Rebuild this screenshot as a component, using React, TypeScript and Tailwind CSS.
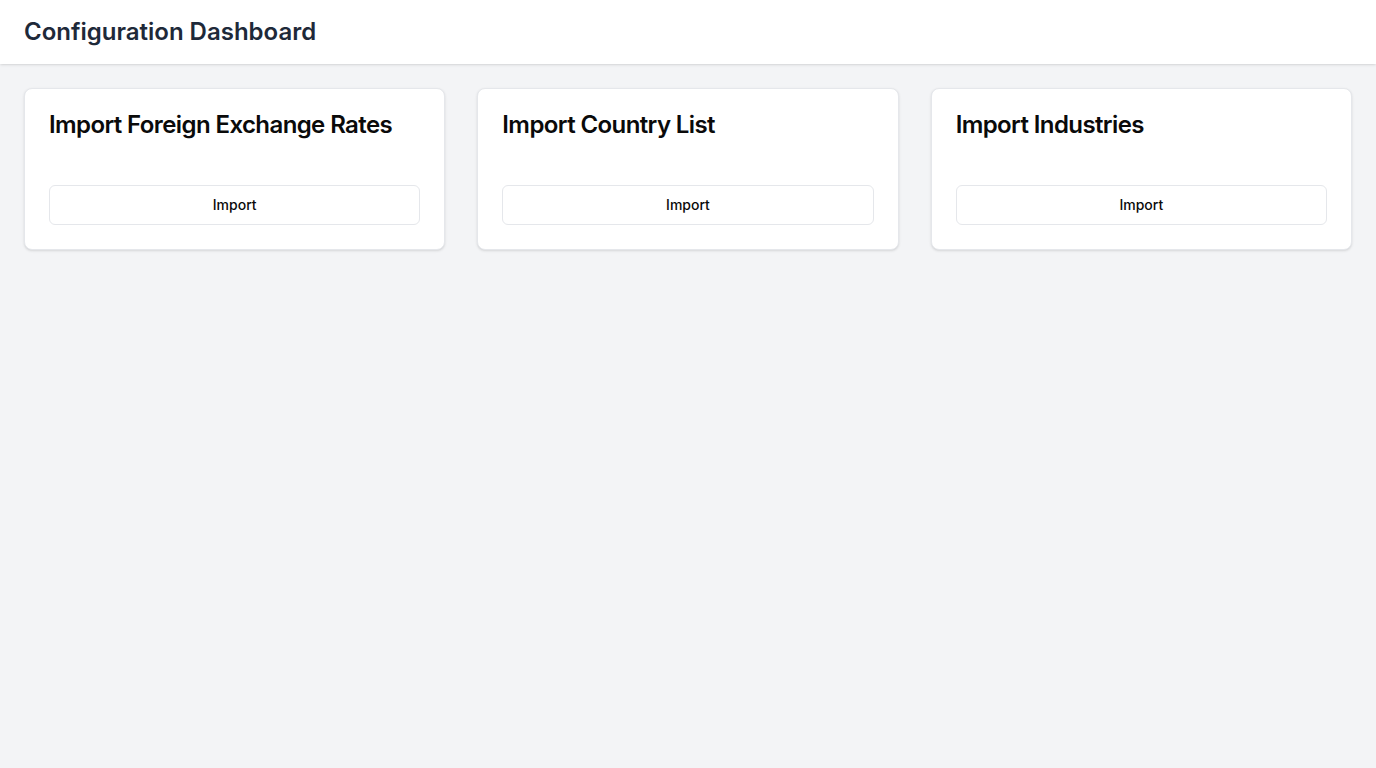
const imports = [
  { title: 'Import Foreign Exchange Rates' },
  { title: 'Import Country List' },
  { title: 'Import Industries' },
];

const App = () => {
  return (
    <div className="min-h-screen bg-gray-100 font-['Inter',sans-serif]">
      <header className="bg-white px-6 py-4 shadow">
        <h1 className="text-2xl font-semibold leading-8 text-gray-800">Configuration Dashboard</h1>
      </header>
      <main className="p-6">
        <div className="grid grid-cols-3 gap-8">
          {imports.map((item) => (
            <div key={item.title} className="rounded-lg border border-gray-200 bg-white p-6 shadow-sm">
              <h2 className="mb-12 text-2xl font-semibold leading-none tracking-tight text-neutral-950">{item.title}</h2>
              <button className="flex h-10 w-full items-center justify-center rounded-md border border-gray-200 bg-white text-sm font-medium text-neutral-950">
                Import
              </button>
            </div>
          ))}
        </div>
      </main>
    </div>
  );
};

export default App;
